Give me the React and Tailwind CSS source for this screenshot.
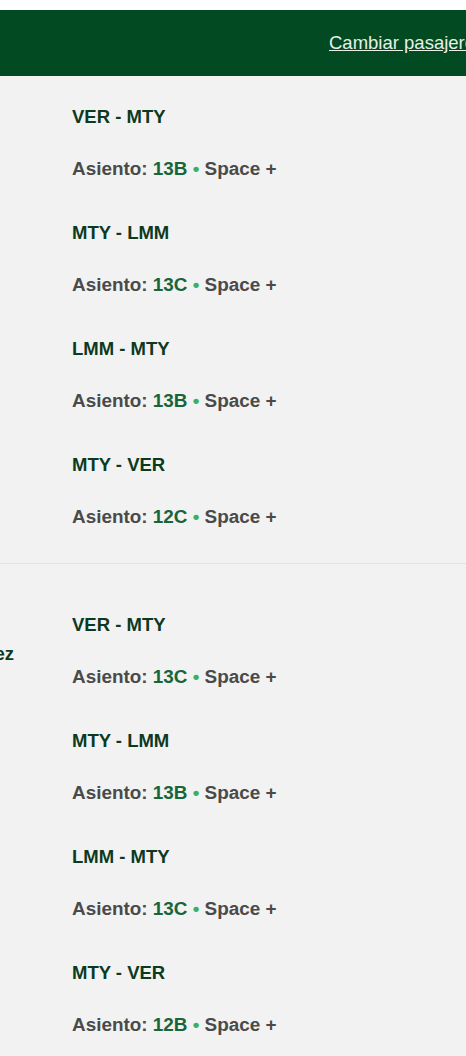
import React from "react";

const groups = [
  {
    name: "",
    top: "pt-[29px] pb-[34px]",
    segments: [
      { route: "VER - MTY", seat: "13B" },
      { route: "MTY - LMM", seat: "13C" },
      { route: "LMM - MTY", seat: "13B" },
      { route: "MTY - VER", seat: "12C" },
    ],
  },
  {
    name: "Jorge Hernández",
    top: "pt-[49px] pb-[40px]",
    segments: [
      { route: "VER - MTY", seat: "13C" },
      { route: "MTY - LMM", seat: "13B" },
      { route: "LMM - MTY", seat: "13C" },
      { route: "MTY - VER", seat: "12B" },
    ],
  },
];

const Segment = ({ route, seat }) => (
  <div className="flex flex-col">
    <span className="text-[18.5px] leading-[24px] font-bold text-[#0d3a1e]">{route}</span>
    <span className="mt-[28px] text-[18.9px] leading-[24px] font-bold text-[#4a4a4a] whitespace-nowrap">
      Asiento: <span className="text-[#17663a]">{seat}</span>{" "}
      <span className="text-[#3fae5c]">•</span> Space +
    </span>
  </div>
);

export default function App() {
  return (
    <div
      className="min-h-screen w-[466px] overflow-hidden bg-[#f2f2f2]"
      style={{ fontFamily: '"Liberation Sans", Arial, sans-serif' }}
    >
      {/* Header */}
      <div className="h-[10px] bg-white" />
      <header className="h-[66px] bg-[#024a22] flex items-center pl-[329px] overflow-hidden">
        <a href="#" className="text-[18.5px] text-[#e6efe8] underline whitespace-nowrap">
          Cambiar pasajero
        </a>
      </header>

      {/* Passenger groups */}
      {groups.map((group, i) => (
        <section
          key={i}
          className={`flex ${group.top} ${i === 0 ? "border-b border-[#e2e2e2]" : ""}`}
        >
          <div className="w-[72px] shrink-0 overflow-hidden flex justify-end pr-[58px]">
            {group.name && (
              <span className="mt-[29px] text-[18.5px] leading-[24px] font-bold text-[#0d3a1e] whitespace-nowrap">
                {group.name}
              </span>
            )}
          </div>
          <div className="flex flex-col gap-[40px]">
            {group.segments.map((s, j) => (
              <Segment key={j} {...s} />
            ))}
          </div>
        </section>
      ))}
    </div>
  );
}
